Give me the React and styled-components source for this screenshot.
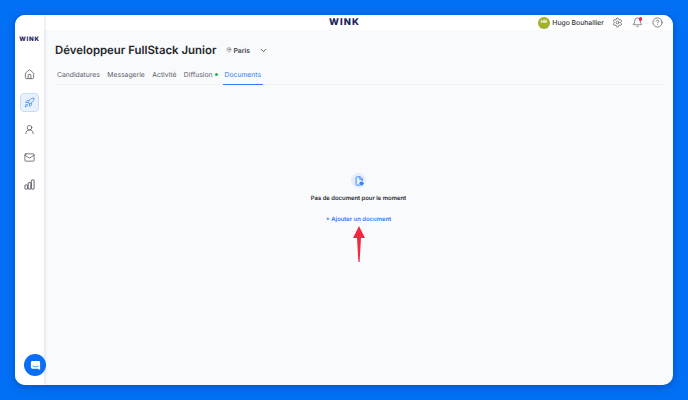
import React from 'react';
import styled, { createGlobalStyle } from 'styled-components';
import { ChevronDown, House, Rocket, UserRound, Mail, Settings, Bell, CircleHelp, MapPin } from 'lucide-react';

const Global = createGlobalStyle`
  html, body { margin: 0; padding: 0; }
  body {
    font-family: Inter, "Liberation Sans", sans-serif;
    text-rendering: geometricPrecision;
    background: #0270f5;
  }
`;

const Page = styled.div`
  width: 688px;
  height: 400px;
  padding: 15px;
  box-sizing: border-box;
  background: #0270f5;
  overflow: hidden;
`;

const Shell = styled.div`
  position: relative;
  display: flex;
  width: 658px;
  height: 370px;
  border-radius: 10px;
  overflow: hidden;
  background: #f9fafc;
  box-shadow: 0 2px 8px rgba(0, 30, 90, 0.35);
`;

const Sidebar = styled.aside`
  width: 29px;
  flex: none;
  background: #fff;
  box-shadow: 1px 0 3px rgba(30, 40, 70, 0.12);
  display: flex;
  flex-direction: column;
  align-items: center;
  padding-top: 22px;
  box-sizing: border-box;
  z-index: 1;
`;

const Logo = styled.div`
  font-size: ${p => p.$size}px;
  font-weight: 800;
  letter-spacing: ${p => p.$track}px;
  color: #1c2360;
  line-height: 1;
`;

const NavList = styled.nav`
  display: flex;
  flex-direction: column;
  align-items: center;
  gap: 8.5px;
  margin-top: 22px;
`;

const NavItem = styled.div`
  width: 19px;
  height: 19px;
  display: flex;
  align-items: center;
  justify-content: center;
  border-radius: 4px;
  box-sizing: border-box;
  color: ${p => (p.$active ? '#3b82f6' : '#4a4f57')};
  background: ${p => (p.$active ? '#e8f1fe' : 'transparent')};
  border: ${p => (p.$active ? '1px solid #c5dcfb' : 'none')};
`;

const Main = styled.div`
  flex: 1;
  display: flex;
  flex-direction: column;
  min-width: 0;
`;

const TopBar = styled.header`
  position: relative;
  height: 15px;
  flex: none;
  background: #fff;
  display: flex;
  align-items: center;
  justify-content: flex-end;
  padding-right: 10.5px;
  gap: 9px;
`;

const CenterLogo = styled.div`
  position: absolute;
  left: 285px;
  top: 3px;
`;

const User = styled.div`
  display: flex;
  align-items: center;
  gap: 2.5px;
  font-size: 6.8px;
  font-weight: 500;
  color: #33363d;
  margin-right: -1.5px;
`;

const Avatar = styled.div`
  width: 12px;
  height: 12px;
  border-radius: 50%;
  background: #a3b02c;
  color: #fff;
  font-size: 4.5px;
  font-weight: 700;
  display: flex;
  align-items: center;
  justify-content: center;
`;

const TopIcon = styled.div`
  position: relative;
  width: 11px;
  height: 11px;
  color: #4a4f57;
  display: flex;
  align-items: center;
  justify-content: center;
`;

const Badge = styled.span`
  position: absolute;
  top: 0;
  right: 0.5px;
  width: 3.5px;
  height: 3.5px;
  border-radius: 50%;
  background: #ef2b3c;
`;

const Content = styled.main`
  position: relative;
  flex: 1;
  display: flex;
  flex-direction: column;
  padding: 13px 10px 0 11px;
`;

const TitleRow = styled.div`
  display: flex;
  align-items: center;
  height: 14px;
`;

const Title = styled.h1`
  margin: 0;
  font-size: 11.4px;
  font-weight: 600;
  color: #25272d;
  white-space: nowrap;
`;

const Location = styled.div`
  display: flex;
  align-items: center;
  gap: 1px;
  font-size: 6.8px;
  font-weight: 600;
  color: #43464d;
  margin-left: 10px;
`;

const Caret = styled.div`
  display: flex;
  color: #33363d;
  margin-left: 9px;
`;

const Tabs = styled.div`
  display: flex;
  align-items: center;
  gap: 3.5px;
  height: 20px;
  margin-top: 7px;
  border-bottom: 1px solid #eef0f4;
  font-size: 6.8px;
`;

const Tab = styled.div`
  height: 20px;
  display: flex;
  align-items: center;
  box-sizing: border-box;
  white-space: nowrap;
  padding: 0 2px;
  color: ${p => (p.$active ? '#2f7cf0' : '#5b606b')};
  border-bottom: ${p => (p.$active ? '1px solid #2f7cf0' : 'none')};
  margin-bottom: ${p => (p.$active ? '-1px' : '0')};
`;

const Dot = styled.span`
  width: 3px;
  height: 3px;
  border-radius: 50%;
  background: #22b45a;
  margin: 0 1px 0 -3px;
`;

const Empty = styled.div`
  position: absolute;
  left: 0;
  right: 0;
  top: 143px;
  display: flex;
  flex-direction: column;
  align-items: center;
`;

const EmptyIcon = styled.div`
  width: 15px;
  height: 15px;
  border-radius: 50%;
  background: #e4edfb;
  color: #3b82f6;
  display: flex;
  align-items: center;
  justify-content: center;
`;

const EmptyText = styled.div`
  margin-top: 7px;
  font-size: 5.9px;
  font-weight: 600;
  color: #25272d;
`;

const AddLink = styled.div`
  margin-top: 14px;
  font-size: 5.9px;
  font-weight: 600;
  color: #2f7cf0;
`;

const Arrow = styled.svg`
  margin-top: 3px;
  display: block;
`;

const Launcher = styled.div`
  position: absolute;
  left: 9px;
  bottom: 9px;
  width: 22px;
  height: 22px;
  border-radius: 50%;
  background: #0b6ef6;
  display: flex;
  align-items: center;
  justify-content: center;
  z-index: 2;
`;

const ChartIcon = () => (
  <svg width="11" height="11" viewBox="0 0 24 24" fill="none" stroke="currentColor" strokeWidth="1.9" strokeLinejoin="round">
    <rect x="2" y="13" width="6" height="9" rx="1" />
    <rect x="9" y="8" width="6" height="14" rx="1" />
    <rect x="16" y="2" width="6" height="20" rx="1" />
  </svg>
);

const DocIcon = () => (
  <svg width="10" height="10" viewBox="0 0 24 24" fill="none" stroke="currentColor" strokeWidth="2.2" strokeLinecap="round" strokeLinejoin="round">
    <path d="M13 22H7a2 2 0 0 1-2-2V4a2 2 0 0 1 2-2h8l5 5v4" />
    <path d="M14 2v6h6" />
    <circle cx="18" cy="18" r="4" fill="currentColor" />
  </svg>
);

const ChatIcon = () => (
  <svg width="11" height="11" viewBox="0 0 24 24" fill="#fff">
    <path d="M5 2h14a3 3 0 0 1 3 3v17l-5-3H5a3 3 0 0 1-3-3V5a3 3 0 0 1 3-3z" />
    <path d="M6.5 13.5c3 2 8 2 11 0" stroke="#0b6ef6" strokeWidth="1.6" fill="none" strokeLinecap="round" />
  </svg>
);

export default function App() {
  return (
    <Page>
      <Global />
      <Shell>
        <Sidebar>
          <Logo $size={6.2} $track={0.7}>WINK</Logo>
          <NavList>
            <NavItem><House size={11} strokeWidth={1.6} /></NavItem>
            <NavItem $active><Rocket size={11} strokeWidth={1.6} /></NavItem>
            <NavItem><UserRound size={11} strokeWidth={1.6} /></NavItem>
            <NavItem><Mail size={11} strokeWidth={1.6} /></NavItem>
            <NavItem><ChartIcon /></NavItem>
          </NavList>
        </Sidebar>
        <Main>
          <TopBar>
            <CenterLogo><Logo $size={9.4} $track={1.1}>WINK</Logo></CenterLogo>
            <User><Avatar>HB</Avatar>Hugo Bouhallier</User>
            <TopIcon><Settings size={11} strokeWidth={1.5} /></TopIcon>
            <TopIcon><Bell size={11} strokeWidth={1.5} /><Badge /></TopIcon>
            <TopIcon><CircleHelp size={11} strokeWidth={1.5} /></TopIcon>
          </TopBar>
          <Content>
            <TitleRow>
              <Title>Développeur FullStack Junior</Title>
              <Location><MapPin size={6} strokeWidth={1.6} />Paris</Location>
              <Caret><ChevronDown size={9} strokeWidth={2.2} /></Caret>
            </TitleRow>
            <Tabs>
              <Tab>Candidatures</Tab>
              <Tab>Messagerie</Tab>
              <Tab>Activité</Tab>
              <Tab>Diffusion</Tab>
              <Dot />
              <Tab $active>Documents</Tab>
            </Tabs>
            <Empty>
              <EmptyIcon><DocIcon /></EmptyIcon>
              <EmptyText>Pas de document pour le moment</EmptyText>
              <AddLink>+ Ajouter un document</AddLink>
              <Arrow width="12" height="36" viewBox="0 0 12 36">
                <path d="M6 0L12 12H8L6.6 36H5.4L4 12H0z" fill="#ee2a42" />
              </Arrow>
            </Empty>
          </Content>
        </Main>
        <Launcher><ChatIcon /></Launcher>
      </Shell>
    </Page>
  );
}
